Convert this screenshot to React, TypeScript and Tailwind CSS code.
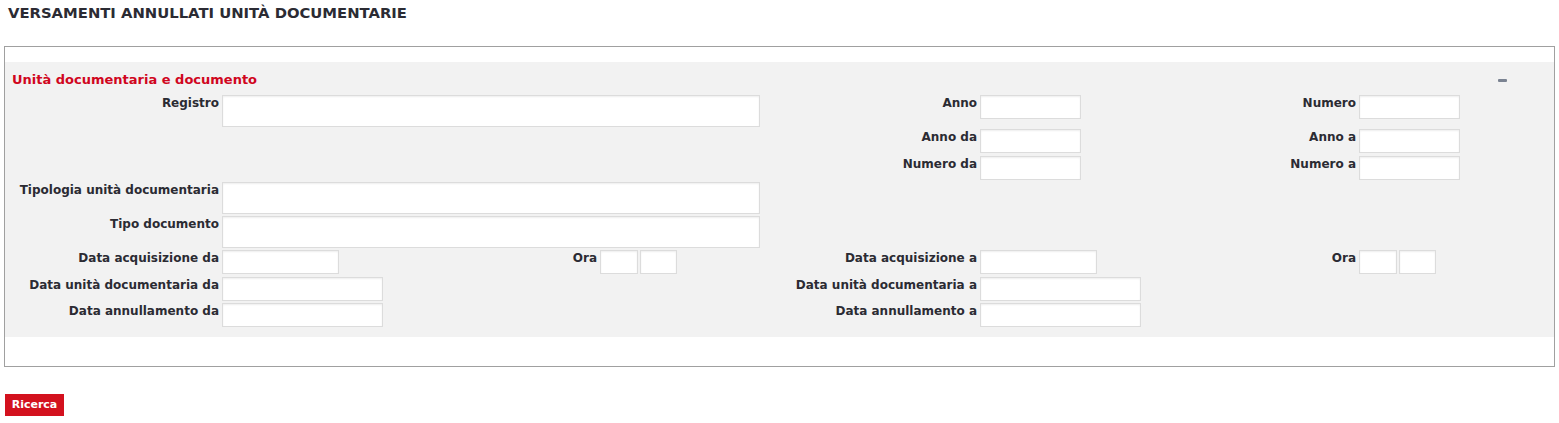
const font = "font-['DejaVu_Sans',Verdana,sans-serif]";

function Label({ children }: { children?: React.ReactNode }) {
  return (
    <div className="pr-[3px] pt-[1px] text-right text-[12px] font-bold leading-[15px] text-[#2b2b33]">
      {children}
    </div>
  );
}

function Field({ w, h = "h-[24px]" }: { w: string; h?: string }) {
  return (
    <input
      type="text"
      className={`${w} ${h} block border border-[#dcdcdc] bg-white shadow-[inset_0_1px_2px_rgba(0,0,0,0.07)] outline-none`}
    />
  );
}

const cols =
  "grid grid-cols-[217px_161px_217px_163px_217px_162px_217px_162px] items-start";

export default function App() {
  return (
    <div className={`${font} min-h-screen bg-white text-[#2b2b33]`}>
      <h1 className="px-2 pt-[4px] text-[14.8px] font-bold leading-[18px] text-[#2b2b33]">
        VERSAMENTI ANNULLATI UNITÀ DOCUMENTARIE
      </h1>

      <div className="mx-1 mt-[24px] border border-[#a0a0a0] pt-[15px] pb-[29px]">
        <div className="bg-[#f2f2f2] pb-[10px]">
          <div className="flex h-[33px] items-center justify-between pl-[7px] pr-[47px] pt-[3px]">
            <span className="text-[13px] font-bold text-[#d0061e]">
              Unità documentaria e documento
            </span>
            <span className="block h-[3px] w-[9px] rounded-[1px] bg-[#7b8392]" />
          </div>

          {/* Registro / Anno / Numero */}
          <div className={`${cols} h-[34px]`}>
            <Label>Registro</Label>
            <div className="col-span-3">
              <Field w="w-[538px]" h="h-[32px]" />
            </div>
            <Label>Anno</Label>
            <Field w="w-[101px]" />
            <Label>Numero</Label>
            <Field w="w-[101px]" />
          </div>

          <div className={`${cols} h-[27px]`}>
            <div className="col-span-4" />
            <Label>Anno da</Label>
            <Field w="w-[101px]" />
            <Label>Anno a</Label>
            <Field w="w-[101px]" />
          </div>

          <div className={`${cols} h-[26px]`}>
            <div className="col-span-4" />
            <Label>Numero da</Label>
            <Field w="w-[101px]" />
            <Label>Numero a</Label>
            <Field w="w-[101px]" />
          </div>

          <div className={`${cols} h-[34px]`}>
            <Label>Tipologia unità documentaria</Label>
            <div className="col-span-3">
              <Field w="w-[538px]" h="h-[32px]" />
            </div>
          </div>

          <div className={`${cols} h-[34px]`}>
            <Label>Tipo documento</Label>
            <div className="col-span-3">
              <Field w="w-[538px]" h="h-[32px]" />
            </div>
          </div>

          <div className={`${cols} h-[27px]`}>
            <Label>Data acquisizione da</Label>
            <Field w="w-[117px]" />
            <Label>Ora</Label>
            <div className="flex gap-[2px]">
              <Field w="w-[38px]" />
              <Field w="w-[37px]" />
            </div>
            <Label>Data acquisizione a</Label>
            <Field w="w-[117px]" />
            <Label>Ora</Label>
            <div className="flex gap-[2px]">
              <Field w="w-[38px]" />
              <Field w="w-[37px]" />
            </div>
          </div>

          <div className={`${cols} h-[26px]`}>
            <Label>Data unità documentaria da</Label>
            <Field w="w-[161px]" />
            <div className="col-span-2" />
            <Label>Data unità documentaria a</Label>
            <Field w="w-[161px]" />
          </div>

          <div className={`${cols} h-[24px]`}>
            <Label>Data annullamento da</Label>
            <Field w="w-[161px]" />
            <div className="col-span-2" />
            <Label>Data annullamento a</Label>
            <Field w="w-[161px]" />
          </div>
        </div>
      </div>

      <div className="flex px-[5px] pt-[27px]">
        <button
          type="button"
          className="h-[22px] w-[59px] bg-[#d3111e] text-[11px] font-bold text-white"
        >
          Ricerca
        </button>
      </div>
    </div>
  );
}
